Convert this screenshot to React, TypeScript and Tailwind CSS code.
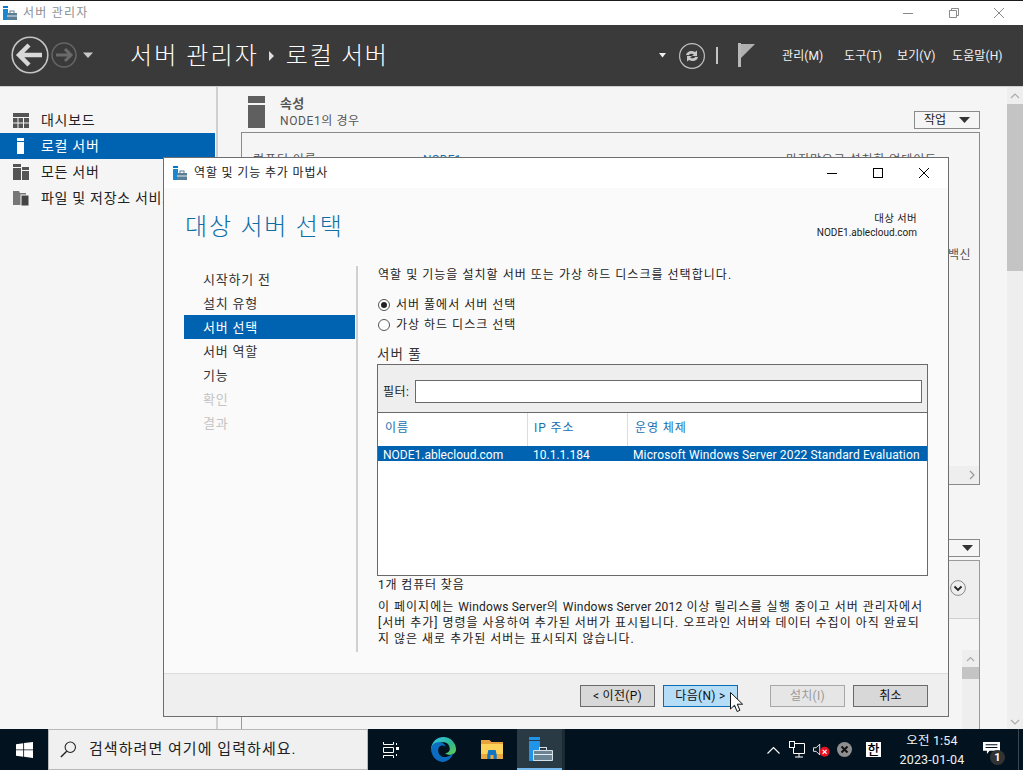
import React from "react";

const SmIcon = ({ s = 1 }: { s?: number }) => (
  <svg width={14 * s} height={14 * s} viewBox="0 0 14 14" className="shrink-0">
    <rect x="0" y="0" width="5" height="2" fill="#0078d4" />
    <rect x="0" y="3" width="5" height="11" fill="#1a86d0" />
    <rect x="4" y="7" width="10" height="7" fill="#5a7f95" />
    <rect x="7" y="5" width="4" height="2.5" fill="none" stroke="#5a7f95" strokeWidth="1" />
    <rect x="4" y="9.5" width="10" height="1" fill="#dfe8ee" />
  </svg>
);

const NavItem = ({ children, icon, active }: { children: React.ReactNode; icon: React.ReactNode; active?: boolean }) => (
  <div className={active ? "h-[26px] flex items-center bg-[#0063b1] text-white" : "h-[26px] flex items-center text-[#222]"}>
    <div className="w-[41px] flex justify-center pl-[8px] pr-[8px]">{icon}</div>
    <span className="text-[14px] tracking-[0.7px] whitespace-nowrap">{children}</span>
  </div>
);

const WizItem = ({ children, active, disabled }: { children: React.ReactNode; active?: boolean; disabled?: boolean }) => (
  <div className={active ? "h-[24px] pl-[19px] pt-[2px] flex items-center bg-[#0063b1] text-white" : disabled ? "h-[24px] pl-[19px] pt-[2px] flex items-center text-[#c4c4c4]" : "h-[24px] pl-[19px] pt-[2px] flex items-center text-[#333]"}>
    {children}
  </div>
);

const Btn = ({ children, hot, disabled }: { children: React.ReactNode; hot?: boolean; disabled?: boolean }) => (
  <div
    className={
      hot
        ? "w-[75px] h-[22px] flex items-center justify-center text-[12px] tracking-[0.3px] border border-[#0a6db3] bg-[#b5ddf8] text-[#111]"
        : disabled
          ? "w-[75px] h-[22px] flex items-center justify-center text-[12px] tracking-[0.3px] border border-[#a8a8a8] bg-[#e6e6e6] text-[#9a9a9a]"
          : "w-[75px] h-[22px] flex items-center justify-center text-[12px] tracking-[0.3px] border border-[#6b6b6b] bg-[#d8d8d8] text-[#111]"
    }
  >
    {children}
  </div>
);

const Lat = ({ children }: { children: React.ReactNode }) => <span className="tracking-[0.2px]">{children}</span>;

export default function App() {
  return (
    <div className="relative w-[1023px] h-[770px] overflow-hidden flex flex-col bg-white font-['Roboto','Noto_Sans_CJK_KR',sans-serif]">
      {/* title bar */}
      <div className="h-[25px] shrink-0 border-t border-t-[#1c1c1c] bg-white flex items-center pl-[3px]">
        <SmIcon />
        <span className="ml-[6px] text-[12px] tracking-[1.2px] text-[#8a8f94]">서버 관리자</span>
        <div className="ml-auto flex items-center">
          <div className="w-[46px] flex justify-center">
            <div className="w-[10px] h-px bg-[#8a8a8a]" />
          </div>
          <div className="w-[46px] flex justify-center">
            <svg width="10" height="10" viewBox="0 0 10 10" fill="none" stroke="#8a8a8a"><path d="M.5 2.5h7v7h-7zM2.5 2.5v-2h7v7h-2" /></svg>
          </div>
          <div className="w-[46px] pr-[2px] flex justify-center">
            <svg width="10" height="10" viewBox="0 0 10 10" stroke="#8a8a8a"><path d="M0 0l10 10M10 0L0 10" /></svg>
          </div>
        </div>
      </div>
      {/* dark header */}
      <div className="h-[61px] shrink-0 bg-[#3a3a3a] flex items-center text-white">
        <svg width="100" height="61" viewBox="0 0 100 61" className="shrink-0">
          <circle cx="30" cy="30" r="17.8" fill="none" stroke="#c4c4c4" strokeWidth="1.6" />
          <path d="M19 30h23M29 20L19 30l10 10" fill="none" stroke="#d8d8d8" strokeWidth="4.4" />
          <circle cx="64" cy="30" r="12" fill="none" stroke="#666" strokeWidth="1.5" />
          <path d="M56 30h15M65 24l6 6-6 6" fill="none" stroke="#6a6a6a" strokeWidth="3" />
          <path d="M83 27.5h10l-5 5.5z" fill="#c8c8c8" />
        </svg>
        <span className="ml-[30px] text-[24px] tracking-[2.1px] leading-none whitespace-nowrap font-light">서버 관리자</span>
        <svg width="6" height="10" viewBox="0 0 6 10" className="ml-[10px] mr-[11px]"><path d="M0 0l5 5-5 5z" fill="#ddd" /></svg>
        <span className="text-[24px] tracking-[1.7px] leading-none whitespace-nowrap font-light">로컬 서버</span>
        <div className="ml-auto flex items-center">
          <svg width="8" height="5" viewBox="0 0 8 5"><path d="M0 0h7L3.5 4.5z" fill="#eee" /></svg>
          <svg width="28" height="28" viewBox="0 0 28 28" className="ml-[11px]">
            <circle cx="14" cy="14" r="12.4" fill="none" stroke="#c0c0c0" strokeWidth="1.2" />
            <path d="M8 13c.6-3.5 5-5.5 9-3l2-1.5V14h-5l2-1.7c-2.4-1.3-4.600-.5-5.3.9zM20 15c-.6 3.500-5 5.500-9 3l-2 1.500V14h5l-2 1.700c2.400 1.300 4.600.5 5.300-.9z" fill="#c8c8c8" />
          </svg>
          <div className="ml-[10px] w-[2px] h-[17px] bg-[#c4c4c4]" />
          <svg width="18" height="25" viewBox="0 0 18 25" className="ml-[20px]">
            <rect x="0" y="0" width="3" height="24" fill="#b8b8b8" />
            <path d="M3 1h14L3 15z" fill="#b0b0b0" />
          </svg>
          <div className="ml-[26px] flex items-center text-[12px] tracking-[0.1px] text-[#f2f2f2]">
            <span className="w-[62px]">관리(M)</span>
            <span className="w-[53px]">도구(T)</span>
            <span className="w-[55px]">보기(V)</span>
            <span className="w-[71px]">도움말(H)</span>
          </div>
        </div>
      </div>
      {/* body */}
      <div className="flex-1 min-h-0 flex border-t border-t-[#cfcfcf] bg-[#f5f5f5]">
        <div className="w-[218px] shrink-0 pt-[20px] border-r-2 border-r-[#cfcfcf] pr-px">
          <NavItem icon={<svg width="16" height="15" viewBox="0 0 16 15" fill="#555"><path d="M0 0h16v4H0zM0 5h4.500v4.500H0zM5.500 5h4.500v4.500H5.500zM11 5h5v4.500h-5zM0 10.500h4.500V15H0zM5.500 10.500h4.500V15H5.500zM11 10.500h5V15h-5z" /></svg>}>대시보드</NavItem>
          <NavItem active icon={<svg width="7" height="16" viewBox="0 0 7 16" fill="#fff"><path d="M0 0h7v3H0zM0 4h7v12H0z" /></svg>}>로컬 서버</NavItem>
          <NavItem icon={<svg width="16" height="16" viewBox="0 0 16 16" fill="#555"><path d="M0 0h8v3H0zM0 4h8v12H0zM9 3h7v3H9zM9 7h7v9H9z" /></svg>}>모든 서버</NavItem>
          <NavItem icon={<svg width="16" height="16" viewBox="0 0 16 16"><path d="M0 1h6l1 2h6v12H0z" fill="#777" /><rect x="8" y="5" width="8" height="11" fill="#444" stroke="#f5f5f5" /></svg>}>파일 및 저장소 서비스</NavItem>
        </div>
        <div className="flex-1 min-w-0 pl-[23px] pr-[43px] flex flex-col relative">
          <div className="h-[45px] shrink-0 flex items-end justify-between pb-[3px]">
            <div className="flex items-start self-start pt-[9px] pl-[7px]">
              <svg width="17" height="32" viewBox="0 0 17 32" fill="#5f5f5f"><path d="M0 0h17v7H0zM0 9h17v23H0z" /></svg>
              <div className="ml-[15px] -mt-[2px]">
                <div className="text-[13px] leading-[17px] pt-[1px] font-bold tracking-[0.3px] text-[#555]">속성</div>
                <div className="text-[12px] leading-[17px] pt-[1px] tracking-[0.6px] text-[#555]">NODE1의 경우</div>
              </div>
            </div>
            <div className="w-[66px] h-[18px] border border-[#8a8a8a] flex items-center justify-between px-[9px] text-[12px] text-[#222]">
              작업
              <svg width="11" height="6" viewBox="0 0 11 6"><path d="M0 0h11L5.500 6z" fill="#333" /></svg>
            </div>
          </div>
          <div className="h-[353px] shrink-0 border border-[#8a8a8a] pt-[18px] pl-[11px] text-[12px] text-[#555] relative flex flex-col">
            <div className="flex whitespace-nowrap">
              <span className="w-[170px] tracking-[0.9px]">컴퓨터 이름</span>
              <span className="text-[#1a6fb0] w-[363px]">NODE1</span>
              <span className="tracking-[0.9px]">마지막으로 설치한 업데이트</span>
            </div>
            <div className="mt-[77px] self-end pr-[8px] tracking-[0.5px]">백신</div>
            <div className="mt-auto h-[18px] -ml-[11px] bg-[#eeeeee] flex justify-end items-center pr-[4px]">
              <svg width="6" height="10" viewBox="0 0 6 10" fill="none" stroke="#999" strokeWidth="1.200"><path d="M1 1l4 4-4 4" /></svg>
            </div>
          </div>
          <div className="mt-[54px] self-end w-[66px] h-[18px] border border-[#8a8a8a] flex items-center justify-end px-[6px]">
            <svg width="11" height="6" viewBox="0 0 11 6"><path d="M0 0h11L5.500 6z" fill="#333" /></svg>
          </div>
          <div className="mt-[3px] flex-1 border border-b-0 border-[#9a9a9a] flex flex-col">
            <div className="h-[58px] shrink-0 bg-[#eeeeee] border-b border-b-[#cfcfcf] flex justify-end items-center pr-[13px] pb-[4px]">
              <svg width="16" height="16" viewBox="0 0 16 16" fill="none">
                <circle cx="8" cy="8" r="7.400" stroke="#8a8a8a" />
                <path d="M4.500 6.500L8 10l3.500-3.500" stroke="#222" strokeWidth="1.800" />
              </svg>
            </div>
            <div className="flex-1 flex justify-end">
              <div className="mt-[31px] w-[17px] bg-[#eeeeee] flex flex-col">
                <div className="h-[17px] flex items-center justify-center">
                  <svg width="9" height="6" viewBox="0 0 9 6" fill="none" stroke="#aaa" strokeWidth="1.200"><path d="M1 5l3.500-3.500L8 5" /></svg>
                </div>
                <div className="h-[12px] bg-[#c4c4c4]" />
              </div>
            </div>
          </div>
          <div className="absolute right-0 top-0 bottom-0 w-[16px] bg-[#eeeeee] flex flex-col">
            <div className="h-[17px] flex items-center justify-center">
              <svg width="10" height="6" viewBox="0 0 10 6" fill="none" stroke="#aaa" strokeWidth="1.200"><path d="M1 5l4-4 4 4" /></svg>
            </div>
            <div className="h-[167px] bg-[#c4c4c4]" />
            <div className="mt-auto h-[14px] flex items-center justify-center">
              <svg width="10" height="6" viewBox="0 0 10 6" fill="none" stroke="#aaa" strokeWidth="1.200"><path d="M1 1l4 4 4-4" /></svg>
            </div>
          </div>
        </div>
      </div>
      {/* taskbar */}
      <div className="h-[41px] shrink-0 bg-[#02131f] flex items-center text-white">
        <div className="w-[48px] flex justify-center">
          <svg width="17" height="16" viewBox="0 0 16 16" fill="#fff" preserveAspectRatio="none"><path d="M0 2.200l6.800-1v6.300H0zM7.600 1.100L16 0v7.500H7.600zM0 8.300h6.800v6.500l-6.800-1zM7.600 8.300H16V16l-8.400-1.200z" /></svg>
        </div>
        <div className="w-[320px] h-full bg-[#f0f0f0] border border-[#b8b8b8] flex items-center pl-[11px] text-[#222]">
          <svg width="17" height="17" viewBox="0 0 19 19" fill="none" stroke="#222" strokeWidth="1.200"><circle cx="11.500" cy="7" r="5.800" /><path d="M7.500 11.500L1 18" strokeWidth="1.600" /></svg>
          <span className="ml-[12px] text-[15px] tracking-[1.05px] whitespace-nowrap">검색하려면 여기에 입력하세요.</span>
        </div>
        <svg width="17" height="16" viewBox="0 0 17 16" fill="none" stroke="#fff" className="ml-[15px] shrink-0">
          <path d="M.5 0v2.500h10V0M.5 16v-2.500h10V16M.5 5.500h10v5H.5z" />
          <path d="M13.500 1v2M13.500 12v2" strokeWidth="1" />
          <rect x="13" y="5" width="3" height="3" fill="#fff" stroke="none" />
        </svg>
        <svg width="25" height="25" viewBox="0 0 28 28" className="ml-[31px] shrink-0">
          <defs>
            <linearGradient id="eg" x1="0" y1="0" x2="1" y2="1">
              <stop offset="0" stopColor="#35c1f1" />
              <stop offset="0.6" stopColor="#2fb88a" />
              <stop offset="1" stopColor="#6ad04f" />
            </linearGradient>
          </defs>
          <path d="M14 0a14 14 0 0114 14c0 4-3.500 6-6.500 6-3 0-5-1-5.500-2 3.500 0 5-2.500 5-4.500C21 8 17 5 12 6 6 7 4 11 4 14c-1 0-3.500 0-4-1C1 5 7 0 14 0z" fill="url(#eg)" />
          <path d="M0 13c1-6 7-8 11-7 3 .7 5 3 5 5-3-3-8-1-8 4 0 5 5 9 10 7 4-1 6-3 7-4-2 6-7 10-12 10C6 28 0 21 0 13z" fill="#0c6cc0" />
        </svg>
        <svg width="22" height="19" viewBox="0 0 21 19" className="ml-[25px] shrink-0" preserveAspectRatio="none">
          <path d="M0 0h8l2 2h11v3H0z" fill="#e8a33d" />
          <path d="M0 4h21v15H0z" fill="#fbd35a" />
          <path d="M0 14h21v5H0z" fill="#e9a93f" />
          <path d="M6 15l1-5h7l1 5v4h-3v-4H9v4H6z" fill="#1275c4" />
        </svg>
        <div className="ml-[14px] w-[45px] h-full bg-[#2a3a45] border-b-2 border-b-[#76b9ed] flex items-center justify-center shrink-0">
          <svg width="24" height="24" viewBox="0 0 24 24" className="ml-[2px]">
            <rect x="0" y="0" width="11" height="3" fill="#1f94e8" />
            <rect x="0" y="4" width="11" height="20" fill="#1f94e8" />
            <path d="M4.500 13.500h19v10h-19z" fill="#6a8494" stroke="#d5e0e6" />
            <rect x="10.500" y="10.500" width="7" height="3" fill="#2a3a45" stroke="#d5e0e6" />
            <rect x="5" y="17" width="18" height="1" fill="#e5edf2" />
          </svg>
        </div>
        <div className="w-[3px] h-full bg-[#1c2a34] shrink-0" />
        <div className="ml-auto flex items-center">
          <svg width="13" height="8" viewBox="0 0 13 8" fill="none" stroke="#fff" strokeWidth="1.100"><path d="M.5 7.500l6-6 6 6" /></svg>
          <svg width="16" height="17" viewBox="0 0 16 17" fill="none" stroke="#fff" className="ml-[9px]"><path d="M4.500 2.500h11v10h-11zM6 16h8M10 12.500V16" /><rect x="0.500" y="0.500" width="5" height="6" fill="#02131f" stroke="#fff" /></svg>
          <svg width="17" height="16" viewBox="0 0 19 16" className="ml-[8px]">
            <path d="M.5 5.500h3l4-4v12l-4-4h-3z" fill="none" stroke="#fff" />
            <circle cx="13" cy="10" r="5.500" fill="#e81123" />
            <path d="M10.800 7.800l4.400 4.400M15.200 7.800l-4.400 4.400" stroke="#fff" strokeWidth="1.300" />
          </svg>
          <svg width="15" height="15" viewBox="0 0 15 15" className="ml-[7px]">
            <circle cx="7.500" cy="7.500" r="7.500" fill="#8f8f8f" />
            <path d="M4.500 4.500l6 6M10.500 4.500l-6 6" stroke="#111" strokeWidth="2" />
          </svg>
          <div className="ml-[14px] w-[15px] h-[15px] bg-white text-black text-[13px] leading-[15px] flex justify-center font-medium">한</div>
          <div className="w-[102px] flex flex-col items-center text-[12.500px] leading-[19px] text-[#f2f2f2] tracking-[0.2px]">
            <span>오전 1:54</span>
            <span>2023-01-04</span>
          </div>
          <div className="relative w-[36px] h-[41px] mr-[4px] border-r border-r-[#3a4650]">
            <svg width="17" height="13" viewBox="0 0 13 12" className="absolute left-0 top-[13px]" preserveAspectRatio="none">
              <path d="M0 0h13v8H5L3 11V8H0z" fill="#fff" />
              <path d="M2 2.500h9M2 5h9" stroke="#02131f" />
            </svg>
            <div className="absolute left-[7px] top-[21px] w-[15px] h-[15px] rounded-full bg-[#333] text-white text-[11px] leading-[15px] text-center font-bold">1</div>
          </div>
        </div>
      </div>
      {/* wizard window */}
      <div className="absolute left-[163px] top-[157px] w-[786px] h-[560px] border border-[#6e6e6e] bg-[#fafafa] flex flex-col">
        <div className="h-[30px] shrink-0 bg-white flex items-center pl-[9px]">
          <SmIcon />
          <span className="ml-[7px] text-[12px] tracking-[0.85px] text-[#222]">역할 및 기능 추가 마법사</span>
          <div className="ml-auto flex items-center">
            <div className="w-[46px] flex justify-center"><div className="w-[10px] h-px bg-black" /></div>
            <div className="w-[46px] flex justify-center"><div className="w-[10px] h-[10px] border border-black" /></div>
            <div className="w-[46px] flex justify-center mr-px">
              <svg width="10" height="10" viewBox="0 0 10 10" stroke="#000"><path d="M0 0l10 10M10 0L0 10" /></svg>
            </div>
          </div>
        </div>
        <div className="h-[78px] shrink-0 flex justify-between pl-[21px] pr-[31px]">
          <div className="text-[24px] leading-none pt-[27px] tracking-[1.8px] text-[#0d6ea8] font-light">대상 서버 선택</div>
          <div className="pt-[24px] text-right text-[10px] leading-[14px] text-[#222]">
            <div className="tracking-[0.3px] text-[10.500px]">대상 서버</div>
            <div>NODE1.ablecloud.com</div>
          </div>
        </div>
        <div className="flex-1 min-h-0 flex pl-[20px] pr-[20px]">
          <div className="w-[174px] shrink-0 h-[386px] border-r-2 border-r-[#d0d0d0] text-[13px] tracking-[0.8px] pt-[1px] pr-px">
            <WizItem>시작하기 전</WizItem>
            <WizItem>설치 유형</WizItem>
            <WizItem active>서버 선택</WizItem>
            <WizItem>서버 역할</WizItem>
            <WizItem>기능</WizItem>
            <WizItem disabled>확인</WizItem>
            <WizItem disabled>결과</WizItem>
          </div>
          <div className="flex-1 min-w-0 pl-[19px] text-[12px] text-[#222]">
            <div className="mt-[2px] pl-px h-[14px] leading-[14px] tracking-[1.03px] whitespace-nowrap">역할 및 기능을 설치할 서버 또는 가상 하드 디스크를 선택합니다.</div>
            <div className="mt-[13px] h-[20px] flex items-center tracking-[1px]">
              <div className="ml-px w-[12px] h-[12px] rounded-full border border-[#555] flex items-center justify-center bg-white">
                <div className="w-[6px] h-[6px] rounded-full bg-[#222]" />
              </div>
              <span className="ml-[6px]">서버 풀에서 서버 선택</span>
            </div>
            <div className="h-[20px] flex items-center tracking-[1px]">
              <div className="ml-px w-[12px] h-[12px] rounded-full border border-[#555] bg-white" />
              <span className="ml-[6px]">가상 하드 디스크 선택</span>
            </div>
            <div className="mt-[9px] h-[20px] flex items-center text-[13.500px] tracking-[1px] text-[#333]">서버 풀</div>
            <div className="w-[551px] h-[212px] border border-[#6a6a6a] bg-white flex flex-col">
              <div className="h-[48px] shrink-0 bg-[#eeeeee] border-b border-b-[#6a6a6a] flex items-center pl-[5px] pr-[5px] pt-[6px]">
                <span className="tracking-[0.4px]">필터:</span>
                <div className="ml-[6px] flex-1 h-[23px] bg-white border border-[#6a6a6a]" />
              </div>
              <div className="h-[33px] shrink-0 flex items-center text-[#1a6fb0] tracking-[0.9px]">
                <div className="w-[150px] pl-[7px] pb-[3px] h-full flex items-center border-r border-r-[#dcdcdc]">이름</div>
                <div className="w-[100px] pl-[6px] pb-[3px] h-full flex items-center border-r border-r-[#dcdcdc]">IP 주소</div>
                <div className="pl-[7px] pb-[3px]">운영 체제</div>
              </div>
              <div className="h-[15px] shrink-0 pt-[2px] bg-[#0063b1] text-white flex items-center leading-none whitespace-nowrap">
                <div className="w-[150px] pl-[5px]">NODE1.ablecloud.com</div>
                <div className="w-[100px] pl-[5px]">10.1.1.184</div>
                <div className="pl-[5px] tracking-[0.14px]">Microsoft Windows Server 2022 Standard Evaluation</div>
              </div>
            </div>
            <div className="mt-[1px] pl-px h-[16px] leading-[16px] tracking-[0.85px]">1개 컴퓨터 찾음</div>
            <div className="mt-[6px] pl-px leading-[16px] tracking-[1px] whitespace-nowrap">
              이 페이지에는 <Lat>Windows Server</Lat>의 <Lat>Windows Server 2012</Lat> 이상 릴리스를 실행 중이고 서버 관리자에서<br />
              [서버 추가] 명령을 사용하여 추가된 서버가 표시됩니다. 오프라인 서버와 데이터 수집이 아직 완료되<br />
              지 않은 새로 추가된 서버는 표시되지 않습니다.
            </div>
          </div>
        </div>
        <div className="h-[43px] shrink-0 bg-[#efefef] border-t border-t-[#dcdcdc] flex items-start justify-end pt-[11px] pr-[20px]">
          <div className="flex gap-[8px]">
            <Btn>&lt; 이전(P)</Btn>
            <Btn hot>다음(N) &gt;</Btn>
          </div>
          <div className="flex gap-[8px] ml-[32px]">
            <Btn disabled>설치(I)</Btn>
            <Btn>취소</Btn>
          </div>
        </div>
      </div>
      {/* cursor */}
      <svg width="14" height="21" viewBox="0 0 14 21" className="absolute left-[730px] top-[692px]">
        <path d="M.5.500v16.500l4-3.800 2.600 6.300 2.800-1.200-2.600-6.100h5.300z" fill="#fff" stroke="#111" strokeWidth="1" />
      </svg>
    </div>
  );
}
